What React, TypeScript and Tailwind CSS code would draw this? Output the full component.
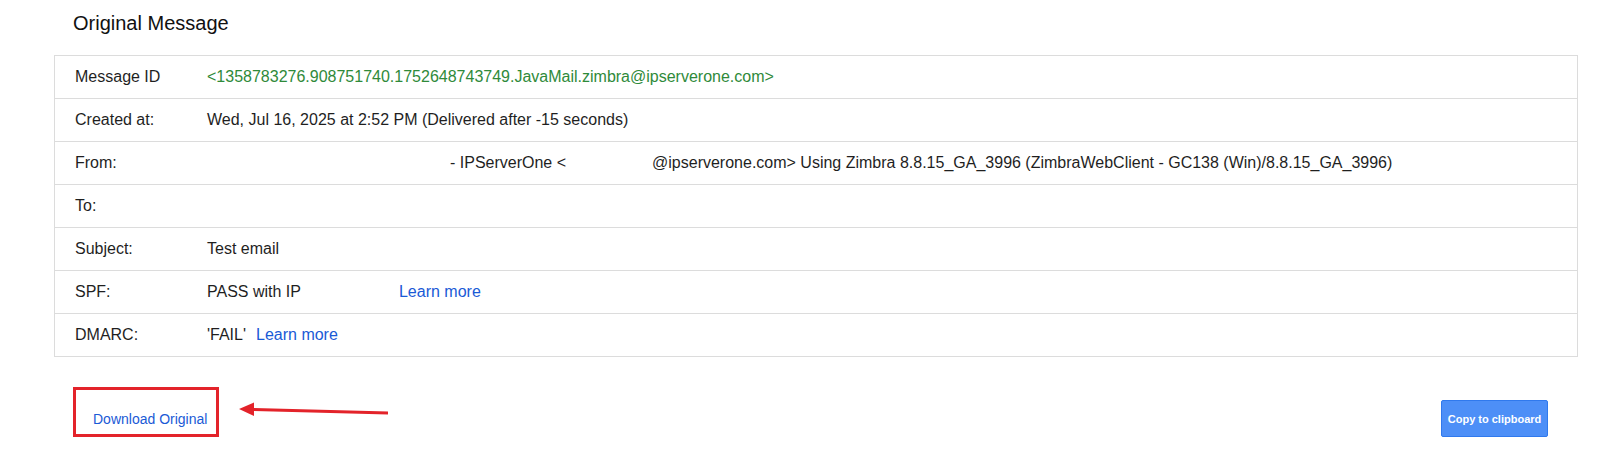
import React from "react";

type Row = {
  label: string;
  value: React.ReactNode;
};

const linkClass = "text-[#1a5ad6] hover:underline cursor-pointer";

const rows: Row[] = [
  {
    label: "Message ID",
    value: (
      <span className="text-[#2f8a3a]">
        {"<1358783276.908751740.1752648743749.JavaMail.zimbra@ipserverone.com>"}
      </span>
    ),
  },
  {
    label: "Created at:",
    value: "Wed, Jul 16, 2025 at 2:52 PM (Delivered after -15 seconds)",
  },
  {
    label: "From:",
    value: (
      <>
        {/* redacted sender name / address */}
        <span className="inline-block w-[243px]" />
        <span>- IPServerOne &lt;</span>
        <span className="inline-block w-[86px]" />
        <span>
          @ipserverone.com&gt; Using Zimbra 8.8.15_GA_3996 (ZimbraWebClient - GC138
          (Win)/8.8.15_GA_3996)
        </span>
      </>
    ),
  },
  { label: "To:", value: "" },
  { label: "Subject:", value: "Test email" },
  {
    label: "SPF:",
    value: (
      <>
        <span>PASS with IP</span>
        <a className={`${linkClass} ml-[98px]`}>Learn more</a>
      </>
    ),
  },
  {
    label: "DMARC:",
    value: (
      <>
        <span>'FAIL'</span>
        <a className={`${linkClass} ml-[10px]`}>Learn more</a>
      </>
    ),
  },
];

function HeaderTable() {
  return (
    <div className="mx-[54px] mr-[41px] border border-[#dcdcdc] divide-y divide-[#dcdcdc]">
      {rows.map((row) => (
        <div key={row.label} className="flex items-center h-[42px] box-content">
          <div className="w-[152px] shrink-0 pl-[20px]">{row.label}</div>
          <div className="whitespace-nowrap">{row.value}</div>
        </div>
      ))}
    </div>
  );
}

export default function App() {
  return (
    <div className="relative w-[1619px] h-[465px] bg-white text-[16px] leading-[18px] text-[#1f1f1f] font-['Liberation_Sans',Arial,sans-serif]">
      <h1 className="pt-[12px] pl-[73px] text-[20px] leading-[23px] font-normal text-[#111]">
        Original Message
      </h1>

      <div className="mt-[20px]">
        <HeaderTable />
      </div>

      <div className="mt-[43px] ml-[54px] mr-[41px] flex items-center justify-between h-[37px]">
        <a className="ml-[39px] text-[14px] leading-[16px] text-[#1a5ad6] cursor-pointer">
          Download Original
        </a>
        <button
          type="button"
          className="mr-[30px] w-[107px] h-[37px] rounded-[2px] border border-[#3079ed] bg-[#4d8ff7] text-[11px] font-bold text-white"
        >
          Copy to clipboard
        </button>
      </div>

      {/* annotation: red box + arrow */}
      <div className="absolute left-[73px] top-[387px] w-[146px] h-[50px] border-[3px] border-[#e3232a] pointer-events-none" />
      <svg
        className="absolute left-[235px] top-[398px] pointer-events-none"
        width="160"
        height="24"
        viewBox="0 0 160 24"
        aria-hidden="true"
      >
        <line x1="17" y1="11.5" x2="153" y2="15" stroke="#e3232a" strokeWidth="3" />
        <polygon points="4,11 19,4.5 19,18" fill="#e3232a" />
      </svg>
    </div>
  );
}
